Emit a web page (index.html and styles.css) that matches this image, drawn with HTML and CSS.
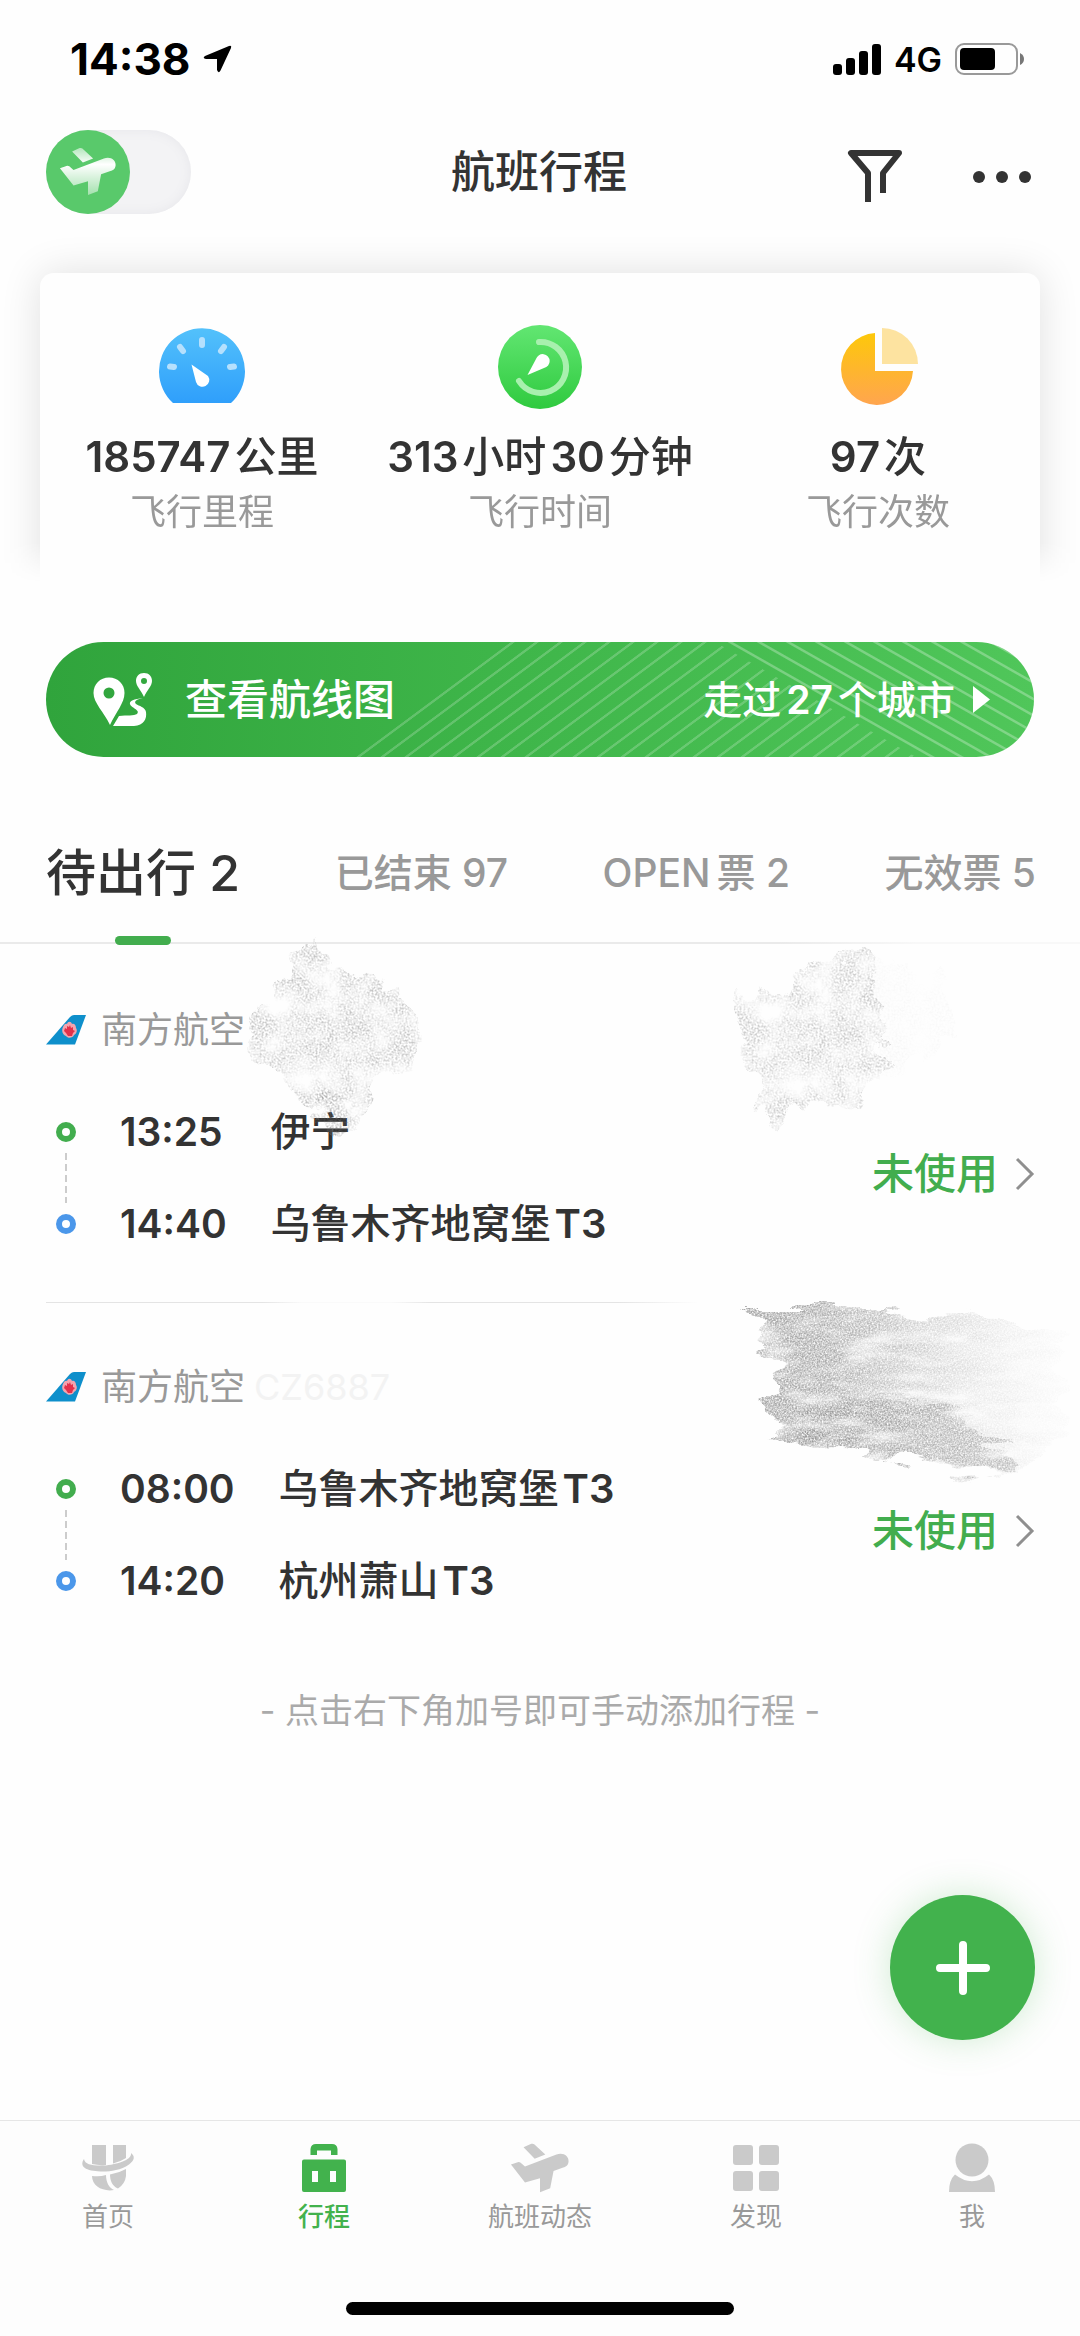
FILE: index.html
```html
<!DOCTYPE html>
<html lang="zh-CN">
<head>
<meta charset="utf-8">
<meta name="viewport" content="width=device-width, initial-scale=1">
<title>航班行程</title>
<link rel="stylesheet" href="styles.css">
</head>
<body>
<svg class="defs" aria-hidden="true">
  <defs>
    <linearGradient id="blue" x1="0" y1="0" x2="0" y2="1"><stop offset="0" stop-color="#53c1fb"/><stop offset="1" stop-color="#2f9ffb"/></linearGradient>
    <linearGradient id="green" x1="0" y1="0" x2="0" y2="1"><stop offset="0" stop-color="#62e672"/><stop offset="1" stop-color="#2fca3f"/></linearGradient>
    <linearGradient id="orange" x1="0" y1="0" x2="0" y2="1"><stop offset="0" stop-color="#fdc80a"/><stop offset="1" stop-color="#ffa54f"/></linearGradient>
    <linearGradient id="fade" x1="0" y1="0" x2="1" y2="0"><stop offset="0" stop-color="#999" stop-opacity=".9"/><stop offset=".25" stop-color="#999" stop-opacity=".8"/><stop offset=".5" stop-color="#999" stop-opacity=".5"/><stop offset=".75" stop-color="#aaa" stop-opacity=".25"/><stop offset="1" stop-color="#bbb" stop-opacity=".04"/></linearGradient>
    <linearGradient id="planeFade" x1="0" y1="0" x2="0" y2="1"><stop offset="0" stop-color="#fff" stop-opacity=".55"/><stop offset=".35" stop-color="#fff"/><stop offset="1" stop-color="#fff" stop-opacity=".45"/></linearGradient>
    <filter id="chalk" x="-10%" y="-10%" width="120%" height="120%" color-interpolation-filters="sRGB">
      <feTurbulence type="fractalNoise" baseFrequency=".02 .07" numOctaves="4" seed="4" result="wave"/>
      <feDisplacementMap in="SourceGraphic" in2="wave" scale="40" xChannelSelector="R" yChannelSelector="G" result="shape"/>
      <feColorMatrix in="wave" values="0 0 0 0 0  0 0 0 0 0  0 0 0 0 0  0 0 2 0 -.1" result="patch"/>
      <feTurbulence type="fractalNoise" baseFrequency=".6" numOctaves="2" seed="9"/>
      <feColorMatrix values="0 0 0 0 0  0 0 0 0 0  0 0 0 0 0  1.8 0 0 0 -.3" result="grain"/>
      <feComposite in="shape" in2="grain" operator="in" result="speck"/>
      <feComposite in="speck" in2="patch" operator="in"/>
    </filter>
    <filter id="dust" x="-10%" y="-10%" width="120%" height="120%" color-interpolation-filters="sRGB">
      <feTurbulence type="fractalNoise" baseFrequency=".04" numOctaves="4" seed="7" result="wave"/>
      <feDisplacementMap in="SourceGraphic" in2="wave" scale="34" xChannelSelector="R" yChannelSelector="G" result="shape"/>
      <feColorMatrix in="wave" values="0 0 0 0 0  0 0 0 0 0  0 0 0 0 0  0 0 2 0 -.4" result="patch"/>
      <feTurbulence type="fractalNoise" baseFrequency=".5" numOctaves="2" seed="3"/>
      <feColorMatrix values="0 0 0 0 0  0 0 0 0 0  0 0 0 0 0  2.4 0 0 0 -.85" result="grain"/>
      <feComposite in="shape" in2="grain" operator="in" result="speck"/>
      <feComposite in="speck" in2="patch" operator="in"/>
    </filter>
    <pattern id="rise" width="24" height="115" patternUnits="userSpaceOnUse" patternTransform="translate(160 0) skewX(-53.4)"><path d="M2 0V115" stroke="#fff" stroke-opacity=".2" stroke-width="4"/></pattern>
    <pattern id="fall" width="29" height="115" patternUnits="userSpaceOnUse" patternTransform="translate(376 0) skewX(60.4)"><path d="M3 0V115" stroke="#fff" stroke-opacity=".28" stroke-width="5"/></pattern>
    <symbol id="plane" viewBox="0 0 62 51"><path d="M14 4 22 .5Q24 0 25 1L36.500 11.500 25.500 16ZM1 22 8 19.500Q9.500 19 11 20L15.500 24 48 11.500C55 9 61 13 60.500 19 60 23 58 24 55 25L45 28.500 41.500 46.500 31 50.500V36L15.500 40.500Z"/></symbol>
    <symbol id="tail" viewBox="0 0 40 30"><path fill="#0e8fcb" d="M0 29.500 24 2Q26 0 28 0H40L29 29.500Z"/><path fill="#f4a3ad" d="M17 12c1-3 3-4 4-3 1-3 4-3 5 0 2-1 4 1 4 4 2 3 0 6-2 7-1 3-6 4-8 1-3-1-5-5-3-9Z"/><path fill="#e3304a" d="M19 13l2 1 0-3 2 1 1-2 1 3 2-1 0 3 2 1-2 2-1 3-4 0-2-3-2-2Z"/></symbol>
  </defs>
</svg>

<div class="statusbar">
  <div class="statusbar-left">
    <time>14:38</time>
    <svg width="29" height="28" viewBox="0 0 29 28"><path d="M26 1Q29 0 28 3L17.500 25.500Q15.500 29 14 25V14H3Q-1 13 2 11Z"/></svg>
  </div>
  <div class="statusbar-right">
    <svg width="48" height="31" viewBox="0 0 48 31"><rect y="20" width="9" height="11" rx="3"/><rect x="13" y="14" width="9" height="17" rx="3"/><rect x="26" y="7" width="9" height="24" rx="3"/><rect x="39" width="9" height="31" rx="3"/></svg>
    <span class="network">4G</span>
    <svg width="69" height="32" viewBox="0 0 69 32"><rect x="1" y="1" width="61" height="30" rx="8" fill="none" stroke="#999" stroke-width="2"/><rect x="5" y="5" width="35" height="22" rx="4"/><path d="M65 10q4 2 4 6t-4 6Z" fill="#777"/></svg>
  </div>
</div>

<header class="header">
  <label class="switch">
    <input type="checkbox" aria-label="切换行程模式">
    <svg class="switch-knob" viewBox="0 0 84 84"><circle cx="42" cy="42" r="42" fill="#59c96b"/><use href="#plane" x="13" y="17" width="58" height="49" fill="url(#planeFade)"/></svg>
  </label>
  <h1 class="title">航班行程</h1>
  <div class="header-actions">
    <button class="icon-button" aria-label="筛选"><svg width="56" height="54" viewBox="0 0 56 54"><path d="M21 53V24L4 4H52L36 24V44" fill="none" stroke="#333" stroke-width="6" stroke-linejoin="round"/></svg></button>
    <button class="icon-button" aria-label="更多"><svg width="60" height="54" viewBox="0 0 60 54"><g fill="#333"><circle cx="7" cy="28" r="6"/><circle cx="30" cy="28" r="6"/><circle cx="53" cy="28" r="6"/></g></svg></button>
  </div>
</header>

<main class="main">
  <section class="stats-frame">
    <div class="stats">
      <div class="stat">
        <svg class="stat-icon" viewBox="0 0 84 84"><g transform="translate(-1 3)"><path fill="url(#blue)" d="M14 75A43 43 0 1 1 72 75Z"/><g stroke="#b5e0fd" stroke-width="6" stroke-linecap="round"><path d="M43 12v5M21 19l3 4M65 19l-3 4M11 38.500l4 .5M75 38.500l-4 .5"/></g><path fill="#fff" d="M32.500 36.500 49 48A6.800 6.800 0 1 1 37 54Z"/></g></svg>
        <p class="stat-value"><span class="num">185747</span><span>公里</span></p>
        <p class="stat-label">飞行里程</p>
      </div>
      <div class="stat">
        <svg class="stat-icon" viewBox="0 0 84 84"><circle cx="42" cy="42" r="42" fill="url(#green)"/><path d="M41 17A25.500 25.500 0 1 1 21 56" fill="none" stroke="#a8f0ae" stroke-width="6" stroke-linecap="round"/><path fill="#fff" d="M29.500 50 38 34A7 7 0 1 1 46 43Z"/></svg>
        <p class="stat-value"><span class="num">313</span><span>小时</span><span class="num">30</span><span>分钟</span></p>
        <p class="stat-label">飞行时间</p>
      </div>
      <div class="stat">
        <svg class="stat-icon" viewBox="0 0 84 84"><g transform="translate(5 3)"><path fill="url(#orange)" d="M34 5A36 36 0 1 0 72 43H34Z"/><path fill="#fde3a0" d="M41 0A36 36 0 0 1 77 36H41Z"/></g></svg>
        <p class="stat-value"><span class="num">97</span><span>次</span></p>
        <p class="stat-label">飞行次数</p>
      </div>
    </div>
  </section>

  <a class="banner" href="#map">
    <svg class="banner-lines" viewBox="0 0 683 115" aria-hidden="true"><path d="M0 115 155 0H364L565 115Z" fill="url(#rise)"/><path d="M374 0H683V115H575Z" fill="url(#fall)"/></svg>
    <svg class="banner-icon" width="60" height="53" viewBox="0 0 60 53" fill="#fff" fill-rule="evenodd"><path d="M16 4.500C25 4.500 31.500 11 31.500 20 31.500 30 23 39 17 52 11 39 .5 30 .5 20 .5 11 7 4.500 16 4.500ZM16 14.500a5.500 5.500 0 1 0 0 11 5.500 5.500 0 1 0 0-11Z"/><path d="M51 0C56 0 59 3.500 59 8 59 13 54 17 51 24 48 17 43 13 43 8 43 3.500 46 0 51 0ZM51 5a3 3 0 1 0 0 6 3 3 0 1 0 0-6Z"/><path d="M50 25C41 26 36 28 37 31 38 35 48 37 44 41 41 43 34 42 26 43L20 53H41C51 52 54 46 53 39 52 34 46 33 43 31 40 28 45 26 50 25Z"/></svg>
    <span class="banner-title">查看航线图</span>
    <span class="banner-note"><span>走过</span><span class="num">27</span><span>个城市</span></span>
    <svg width="17" height="27" viewBox="0 0 17 27"><path d="M0 0 17 13.500 0 27Z" fill="#fff"/></svg>
  </a>

  <div class="tabs" role="tablist">
    <button class="tab tab-active" role="tab" aria-selected="true">待出行 2</button>
    <button class="tab" role="tab">已结束 97</button>
    <button class="tab" role="tab"><span>OPEN</span><span>票 2</span></button>
    <button class="tab" role="tab">无效票 5</button>
  </div>

  <div class="trips">
    <a class="trip" href="#trip1">
      <div class="airline"><svg width="40" height="30"><use href="#tail"/></svg><span>南方航空</span></div>
      <div class="trip-body">
        <div class="route">
          <span class="dot dot-from"></span><time>13:25</time><span class="place">伊宁</span>
          <span class="dash"></span>
          <span class="dot dot-to"></span><time>14:40</time><span class="place"><span>乌鲁木齐地窝堡</span><span class="num">T3</span></span>
        </div>
        <span class="state">未使用</span>
        <svg class="chevron" viewBox="0 0 18 32"><path d="M1 1 16 16 1 31"/></svg>
      </div>
      <svg class="smudge smudge-a" viewBox="0 0 200 200" aria-hidden="true"><g filter="url(#dust)"><path fill="#888" fill-opacity=".5" d="M72 0 100 30 140 40 182 85 170 125 132 148 112 190 78 180 10 110 14 72 40 40Z"/><path fill="#777" fill-opacity=".7" d="M75 160 110 155 112 196 80 192Z"/></g></svg>
      <svg class="smudge smudge-b" viewBox="0 0 240 190" aria-hidden="true"><g filter="url(#dust)"><path fill="#888" fill-opacity=".45" d="M0 45 50 50 75 15 130 5 150 80 150 140 100 165 60 160 45 185 30 175Z"/><path fill="#888" fill-opacity=".06" d="M130 10 210 30 220 90 140 140Z"/></g></svg>
    </a>
    <a class="trip" href="#trip2">
      <div class="airline"><svg width="40" height="30"><use href="#tail"/></svg><span>南方航空</span><span class="flight-no">CZ6887</span></div>
      <div class="trip-body">
        <div class="route">
          <span class="dot dot-from"></span><time>08:00</time><span class="place"><span>乌鲁木齐地窝堡</span><span class="num">T3</span></span>
          <span class="dash"></span>
          <span class="dot dot-to"></span><time>14:20</time><span class="place"><span>杭州萧山</span><span class="num">T3</span></span>
        </div>
        <span class="state">未使用</span>
        <svg class="chevron" viewBox="0 0 18 32"><path d="M1 1 16 16 1 31"/></svg>
      </div>
      <svg class="smudge smudge-c" viewBox="0 0 330 180" aria-hidden="true"><g filter="url(#chalk)"><path fill="url(#fade)" d="M6 6 140 6 320 26 320 130 276 170 200 164 110 146 24 134 36 114 22 98 32 72 10 48 20 28Z"/><path fill="#888" fill-opacity=".45" d="M60 92 200 100 276 168 180 160 60 136Z"/></g></svg>
    </a>
  </div>
  <p class="hint">- 点击右下角加号即可手动添加行程 -</p>
</main>

<button class="fab" aria-label="添加行程"><svg width="54" height="54" viewBox="0 0 54 54"><path d="M27 4V50M4 27H50" stroke="#fff" stroke-width="8" stroke-linecap="round"/></svg></button>

<footer class="footer">
  <nav class="tabbar">
    <a class="tabbar-item" href="#home"><svg width="54" height="48" viewBox="0 -1 54 48"><path d="M11 0H25V20Q17 20.500 11 19ZM32 0H45V13Q39 17 32 18.500ZM3 14C4 20 12 21 25 20.500 40 18.500 51 14 50 8 54 11 54 15 48 19.500 40 25 30 26.500 22 26.500 8 26.500-3 23 3 14ZM11 31Q19 32 25 30C25 37 28 43 33 45 22 47 11 41 11 31ZM29 29.500Q38 28 45 24V31Q44 39 37 43.500C31 41 29 35 29 29.500Z"/></svg><span>首页</span></a>
    <a class="tabbar-item tabbar-item-active" href="#trips"><svg width="44" height="48" viewBox="0 0 44 48"><path d="M8.500 11V5Q9 0 14 0H30Q35 0 35.500 5V11H29V6.500H15V11ZM2 15.500H42Q44 15.500 44 17.500V46Q44 48 42 48H2Q0 48 0 46V17.500Q0 15.500 2 15.500ZM10 27V38H16V27ZM28 27V38H34V27Z" fill-rule="evenodd"/></svg><span>行程</span></a>
    <a class="tabbar-item" href="#flights"><svg width="60" height="48" viewBox="0 0 60 48"><use href="#plane" width="60" height="50" y="-1"/></svg><span>航班动态</span></a>
    <a class="tabbar-item" href="#discover"><svg width="46" height="48" viewBox="0 0 46 48"><rect y="1" width="20" height="20" rx="3"/><rect x="26" y="1" width="20" height="20" rx="3"/><rect y="27" width="20" height="20" rx="3"/><rect x="26" y="27" width="20" height="20" rx="3"/></svg><span>发现</span></a>
    <a class="tabbar-item" href="#me"><svg width="46" height="48" viewBox="0 0 46 48"><circle cx="23" cy="16" r="16.500"/><path d="M0 48Q0 36 6 30.500Q23 44 40 30.500Q46 36 46 48Z"/></svg><span>我</span></a>
  </nav>
  <div class="home-indicator"></div>
</footer>
</body>
</html>
```

FILE: styles.css
```css
* { box-sizing: border-box; }

body {
  margin: 0;
  min-height: 100vh;
  display: flex;
  flex-direction: column;
  background: #fefefe;
  color: #333;
  font-family: Inter, "Noto Sans CJK SC", sans-serif;
  font-size: 39px;
  font-weight: 500;
}

h1, p { margin: 0; }
a { color: inherit; text-decoration: none; }
button { padding: 0; border: 0; background: none; color: inherit; font: inherit; cursor: pointer; }
svg { display: block; flex: none; overflow: visible; }
.defs { position: absolute; width: 0; height: 0; }
.num { font-weight: 600; }

/* Status bar */
.statusbar {
  height: 118px;
  padding: 0 56px 0 70px;
  display: flex;
  align-items: center;
  justify-content: space-between;
  color: #000;
}
.statusbar-left, .statusbar-right { display: flex; align-items: center; gap: 13px; }
.statusbar-left { font-size: 44px; font-weight: 700; }
.network { font-size: 34px; font-weight: 600; }

/* Header */
.header {
  height: 108px;
  padding: 0 48px 0 46px;
  display: grid;
  grid-template-columns: 1fr auto 1fr;
  align-items: center;
}
.switch { position: relative; width: 145px; height: 84px; }
.switch input {
  appearance: none;
  display: block;
  width: 100%;
  height: 100%;
  margin: 0;
  border-radius: 42px;
  background: #f3f3f5;
  box-shadow: inset 0 0 12px #e6e6ea;
}
.switch-knob { position: absolute; left: 0; top: 0; width: 84px; height: 84px; }
.title { font-size: 44px; font-weight: 500; line-height: 60px; }
.header-actions { display: flex; justify-content: flex-end; gap: 69px; padding-top: 8px; }

/* Totals card */
.stats-frame {
  padding: 47px 40px 0;
  mask-image: linear-gradient(#000 86%, transparent 97%);
}
.stats {
  height: 321px;
  padding-top: 52px;
  display: grid;
  grid-template-columns: repeat(3, 1fr);
  gap: 14px;
  border-radius: 14px;
  background: #fefefe;
  box-shadow: 0 0 40px rgba(0, 0, 0, .12);
}
.stat { display: flex; flex-direction: column; align-items: center; white-space: nowrap; }
.stat-icon { width: 84px; height: 84px; margin-bottom: 20px; }
.stat-value { display: flex; gap: 4px; font-size: 42px; line-height: 56px; }
.stat-label { font-size: 36px; font-weight: 400; line-height: 54px; color: #999; }

/* Route map banner */
.banner {
  position: relative;
  height: 115px;
  margin: 48px 46px 0;
  padding: 0 44px 0 47px;
  display: flex;
  align-items: center;
  overflow: hidden;
  border-radius: 58px;
  background: linear-gradient(90deg, #30a43c, #3eb549 45%, #50c65a);
  color: #fff;
}
.banner > * { position: relative; }
.banner .banner-lines { position: absolute; right: 0; top: 0; width: 683px; height: 115px; }
.banner-icon { margin-right: 32px; }
.banner-title { font-size: 42px; line-height: 56px; }
.banner-note { display: flex; align-items: baseline; gap: 5px; margin: 0 18px 0 auto; line-height: 56px; }

/* Tabs */
.tabs {
  margin-top: 81px;
  padding: 0 44px 0 46px;
  display: flex;
  justify-content: space-between;
  background: linear-gradient(90deg, #eaeaea 72%, #f8f8f8 85%) bottom / 100% 2px no-repeat;
}
.tab { position: relative; display: flex; gap: 6px; padding-bottom: 36px; line-height: 70px; white-space: nowrap; color: #999; }
.tab-active { font-size: 50px; color: #333; }
.tab-active::after {
  content: "";
  position: absolute;
  left: 50%;
  bottom: -1px;
  width: 56px;
  height: 9px;
  margin-left: -28px;
  border-radius: 5px;
  background: #42ad4e;
}

/* Trip list */
.trips { padding: 2px 46px 0; }
.trip { position: relative; display: block; padding: 59px 0 53px; }
.trip + .trip { border-top: 1px solid; border-image: linear-gradient(90deg, #e4e4e4 22%, #fafafa 26%, #fafafa 35%, #e4e4e4 39%, #e4e4e4 58%, transparent 66%) 1; }
.airline { display: flex; align-items: center; gap: 15px; font-size: 36px; font-weight: 400; line-height: 50px; color: #999; }
.flight-no { margin-left: -6px; color: #f3f3f3; }
.trip-body { margin-top: 52px; display: flex; align-items: center; }
.route {
  margin-right: auto;
  display: grid;
  grid-template-columns: 40px auto auto;
  grid-template-rows: 50px 42px 50px;
  align-items: center;
  line-height: 50px;
  white-space: nowrap;
}
.route time { padding: 0 44px 0 34px; font-weight: 600; }
.place { display: flex; gap: 4px; font-size: 40px; }
.dot { width: 20px; height: 20px; margin-left: 10px; border: 6px solid #42ad4e; border-radius: 50%; background: #fff; }
.dot-to { border-color: #4b97ea; }
.dash {
  grid-column: 1 / -1;
  width: 2px;
  height: 50px;
  margin: -4px 0 -4px 19px;
  background: repeating-linear-gradient(#ccc 0 7px, transparent 7px 11px);
}
.state { font-size: 42px; line-height: 50px; padding-bottom: 8px; color: #42ad4e; }
.chevron { width: 18px; height: 32px; margin: 0 0 8px 18px; fill: none; stroke: #8f8f8f; stroke-width: 3; }

.smudge { position: absolute; pointer-events: none; }
.smudge-a { left: 196px; top: -6px; width: 200px; height: 200px; }
.smudge-b { right: 60px; top: 0; width: 240px; height: 190px; }
.smudge-c { right: -40px; top: 0; width: 330px; height: 180px; }

.hint { margin-top: 27px; padding: 0 46px; font-size: 34px; font-weight: 400; line-height: 50px; text-align: center; color: #aaa; }

/* Floating add button */
.fab {
  position: fixed;
  right: 45px;
  bottom: 296px;
  width: 145px;
  height: 145px;
  display: grid;
  place-items: center;
  border-radius: 50%;
  background: #42b24d;
  box-shadow: 0 0 36px rgba(66, 178, 77, .25);
}

/* Bottom navigation */
.footer { margin-top: auto; border-top: 1px solid #e6e6e6; background: #fdfdfd; }
.tabbar { display: grid; grid-template-columns: repeat(5, 1fr); padding-top: 23px; }
.tabbar-item {
  display: flex;
  flex-direction: column;
  align-items: center;
  gap: 9px;
  font-size: 26px;
  font-weight: 400;
  line-height: 32px;
  color: #999;
  fill: #cacaca;
}
.tabbar-item-active { color: #42b24d; fill: #42b24d; font-weight: 500; }
.home-indicator { width: 36%; height: 13px; margin: 69px auto 21px; border-radius: 7px; background: #000; }
```
